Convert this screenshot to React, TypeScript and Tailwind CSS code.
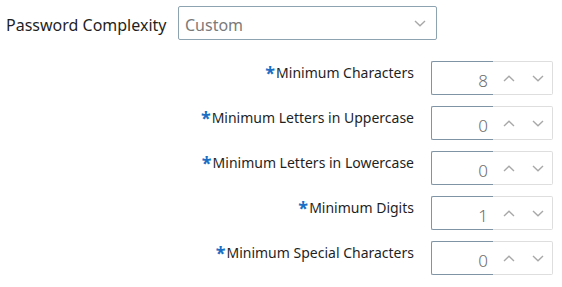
import React from "react";

const rows = [
  { label: "Minimum Characters", value: "8" },
  { label: "Minimum Letters in Uppercase", value: "0" },
  { label: "Minimum Letters in Lowercase", value: "0" },
  { label: "Minimum Digits", value: "1" },
  { label: "Minimum Special Characters", value: "0" },
];

function Chevron({ up }: { up?: boolean }) {
  return (
    <svg width="12" height="7" viewBox="0 0 12 7" fill="none" stroke="#a8a8a8" strokeWidth="1.4">
      {up ? <path d="M1 6 L6 1.3 L11 6" /> : <path d="M1 1 L6 5.7 L11 1" />}
    </svg>
  );
}

export default function App() {
  return (
    <div
      className="w-[562px] h-[287px] bg-white text-[#1f1f1f] relative"
      style={{ fontFamily: '"Noto Sans", "Open Sans", sans-serif' }}
    >
      <div className="flex items-center pt-[6px]">
        <div className="pl-[6px] w-[178px] text-[16px] leading-none pt-[3px]">Password Complexity</div>
        <div className="w-[259px] h-[34px] border border-[#8ea3b2] rounded-[2px] flex items-center justify-between pl-[6px] pr-[10px]">
          <span className="text-[16px] text-[#7a7a7a] leading-none pt-[3px]">Custom</span>
          <Chevron />
        </div>
      </div>
      <div className="flex flex-col gap-[11px] pt-[21px]">
        {rows.map((r) => (
          <div key={r.label} className="flex items-center">
            <div className="w-[416px] flex justify-end pr-[2px] pb-[6px] text-[14px]">
              <span className="text-[#1a6fc4] text-[18px] leading-none mr-[1px] relative top-[-2px] font-bold">*</span>
              <span className="leading-none">{r.label}</span>
            </div>
            <div className="ml-[15px] flex h-[34px] w-[122px]">
              <div className="w-[62px] h-full border border-r-0 border-[#7f94a5] rounded-l-[2px] flex items-center justify-end pr-[5px] pt-[5px] text-[17px] text-[#6e6e6e] font-light">
                {r.value}
              </div>
              <div className="flex-1 h-full border border-l-0 border-[#dedede] rounded-r-[2px] flex items-center pl-[10px] gap-[17px]">
                <Chevron up />
                <Chevron />
              </div>
            </div>
          </div>
        ))}
      </div>
    </div>
  );
}
